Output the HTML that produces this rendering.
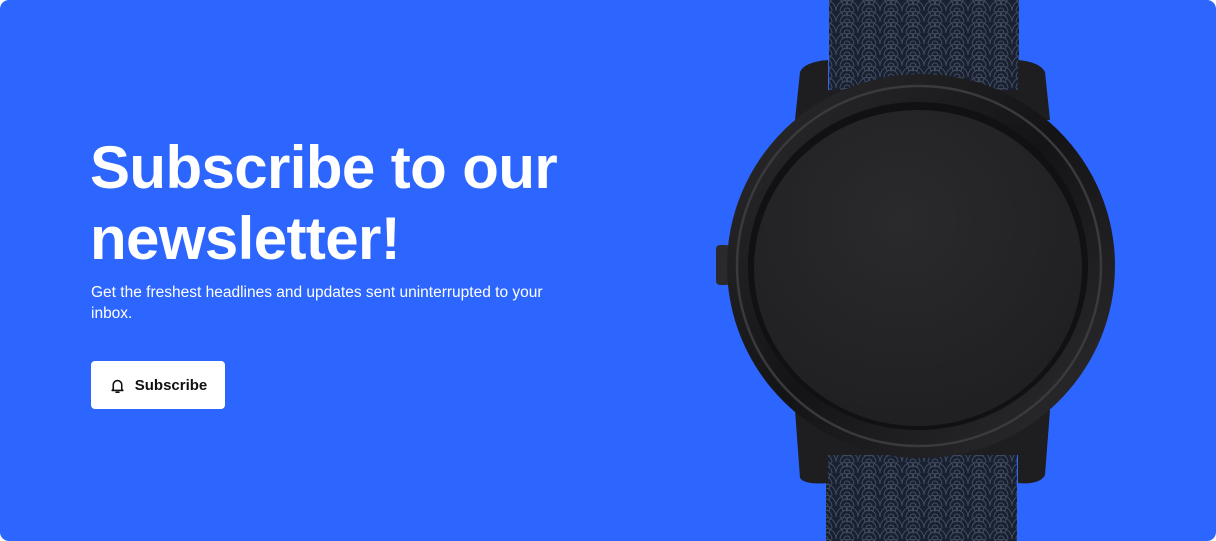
<!DOCTYPE html>
<html><head><style>
html,body{margin:0;padding:0;background:#fff;}
.card{position:absolute;left:0;top:0;width:1216px;height:541px;background:#2d66ff;border-radius:9px;overflow:hidden;font-family:"Liberation Sans",sans-serif;}
h1{position:absolute;left:90px;top:132px;margin:0;color:#fff;font-size:60px;line-height:71px;font-weight:700;letter-spacing:-0.6px;}
p{position:absolute;left:91px;top:282px;margin:0;color:#fff;font-size:15.5px;line-height:21px;width:480px;}
.btn{position:absolute;left:91px;top:361px;width:134px;height:48px;background:#fff;border-radius:4px;display:flex;align-items:center;justify-content:center;gap:9px;font-size:15px;font-weight:700;color:#111;}
svg.w{position:absolute;left:0;top:0;}
</style></head><body>
<div class="card">
<h1>Subscribe to our<br>newsletter!</h1>
<p>Get the freshest headlines and updates sent uninterrupted to your inbox.</p>
<div class="btn"><svg width="17" height="17" viewBox="0 0 24 24" fill="none" stroke="#111" stroke-width="2.2" stroke-linecap="round" stroke-linejoin="round"><path d="M6 17V11a6 6 0 0 1 12 0v6l1.5 2h-15z"/><path d="M10 21.5h4"/></svg>Subscribe</div>
<svg class="w" width="1216" height="541">
<defs>
<pattern id="sc" width="22" height="11" patternUnits="userSpaceOnUse">
<rect width="22" height="11" fill="#19202f"/>
<g fill="none" stroke="#465066" stroke-width="0.9">
<path d="M0 11a11 11 0 0 1 22 0M4 11a7 7 0 0 1 14 0M8 11a3 3 0 0 1 6 0"/>
<path d="M-11 5.5a11 11 0 0 1 22 0M11 5.5a11 11 0 0 1 22 0M-7 5.5a7 7 0 0 1 14 0M15 5.5a7 7 0 0 1 14 0"/>
</g>
</pattern>
<radialGradient id="face" cx="0.45" cy="0.35" r="0.7"><stop offset="0" stop-color="#2a2a2c"/><stop offset="1" stop-color="#1f1f21"/></radialGradient>
<linearGradient id="bez" x1="0" y1="0" x2="1" y2="1"><stop offset="0" stop-color="#2c2c2e"/><stop offset="0.5" stop-color="#141416"/><stop offset="1" stop-color="#2e2e32"/></linearGradient>
</defs>
<rect x="829" y="0" width="190" height="95" fill="url(#sc)"/>
<rect x="826" y="440" width="191" height="101" fill="url(#sc)"/>
<path d="M800 72 Q804 62 828 60 L828 90 L1018 90 L1018 60 Q1040 62 1045 72 L1050 120 L795 120 Z" fill="#1e1e20"/>
<path d="M795 410 L1050 410 L1045 475 Q1040 485 1018 483 L1018 455 L828 455 L828 483 Q805 485 800 478 Z" fill="#1e1e20"/>
<rect x="716" y="245" width="14" height="40" rx="4" fill="#2a2a2c"/>
<ellipse cx="921" cy="266" rx="194" ry="192" fill="url(#bez)"/>
<ellipse cx="919" cy="266" rx="182" ry="180" fill="none" stroke="#3a3a3e" stroke-width="2.5"/>
<ellipse cx="918" cy="266" rx="170" ry="164" fill="#111113"/>
<ellipse cx="918" cy="268" rx="164" ry="158" fill="url(#face)"/>
</svg>
</div>
</body></html>
